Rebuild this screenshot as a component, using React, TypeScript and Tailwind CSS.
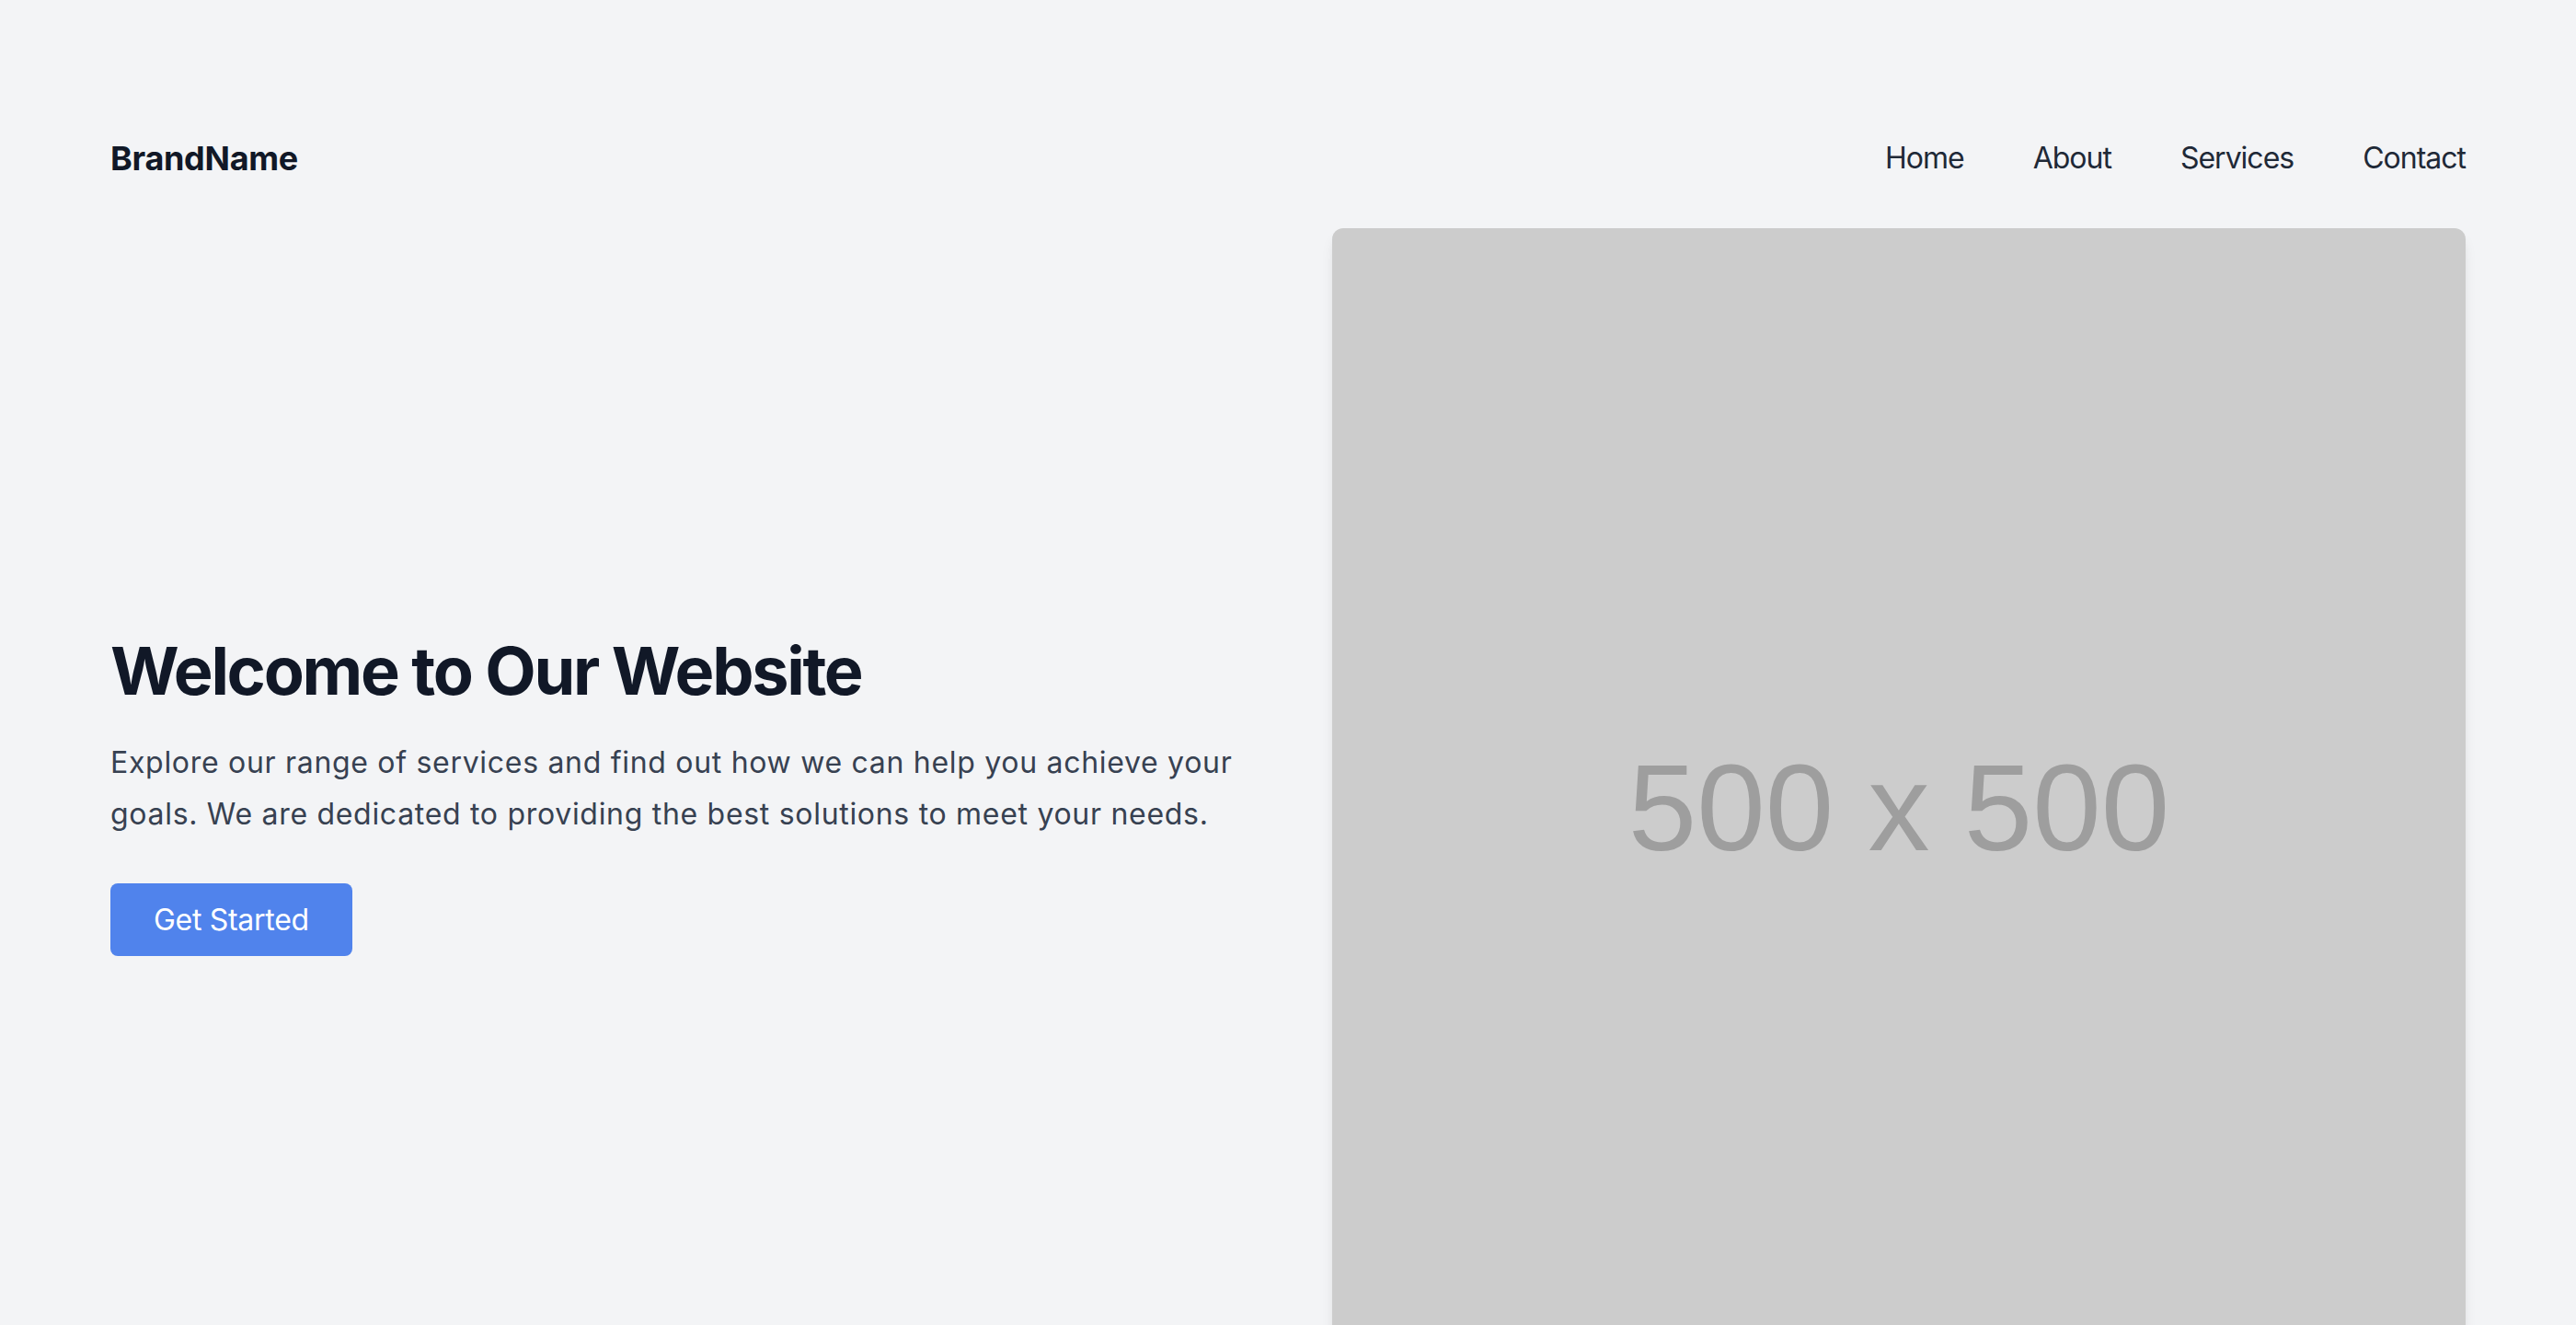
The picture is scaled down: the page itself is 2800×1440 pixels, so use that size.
import React from 'react';

const links = ['Home', 'About', 'Services', 'Contact'];

export default function App() {
  return (
    <div className="min-h-screen bg-[#f3f4f6] font-['Inter','Noto_Sans',sans-serif] overflow-hidden">
      <div className="px-[120px] pt-[144px]">
        {/* Header */}
        <header className="flex items-center justify-between">
          <div className="text-[36px] leading-[56px] font-bold tracking-[-0.3px] text-[#111827]">BrandName</div>
          <nav className="flex items-center gap-[75px]">
            {links.map((l) => (
              <a key={l} href="#" className="text-[32px] leading-[48px] tracking-[-1px] text-[#1f2937]">
                {l}
              </a>
            ))}
          </nav>
        </header>

        {/* Hero */}
        <section className="mt-[48px] grid grid-cols-2 gap-[96px] items-center">
          <div>
            <h1 className="text-[72px] leading-[80px] font-bold tracking-[-2.3px] text-[#111827] mb-[32px]">
              Welcome to Our Website
            </h1>
            <p className="text-[32px] leading-[56px] tracking-[0.7px] text-[#374151] mb-[47px]">
              Explore our range of services and find out how we can help you achieve your goals. We are dedicated to providing the best solutions to meet your needs.
            </p>
            <button className="h-[79px] px-[47px] rounded-[8px] bg-[#5083ec] text-white text-[32px] leading-[48px] tracking-[-0.3px]">
              Get Started
            </button>
          </div>
          <div className="aspect-square w-full rounded-[12px] bg-[#cccccc] shadow-lg flex items-center justify-center pt-[28px]">
            <span className="font-['Liberation_Sans',Arial,sans-serif] text-[134px] leading-none text-[#9e9e9e]">
              500 x 500
            </span>
          </div>
        </section>
      </div>
    </div>
  );
}
